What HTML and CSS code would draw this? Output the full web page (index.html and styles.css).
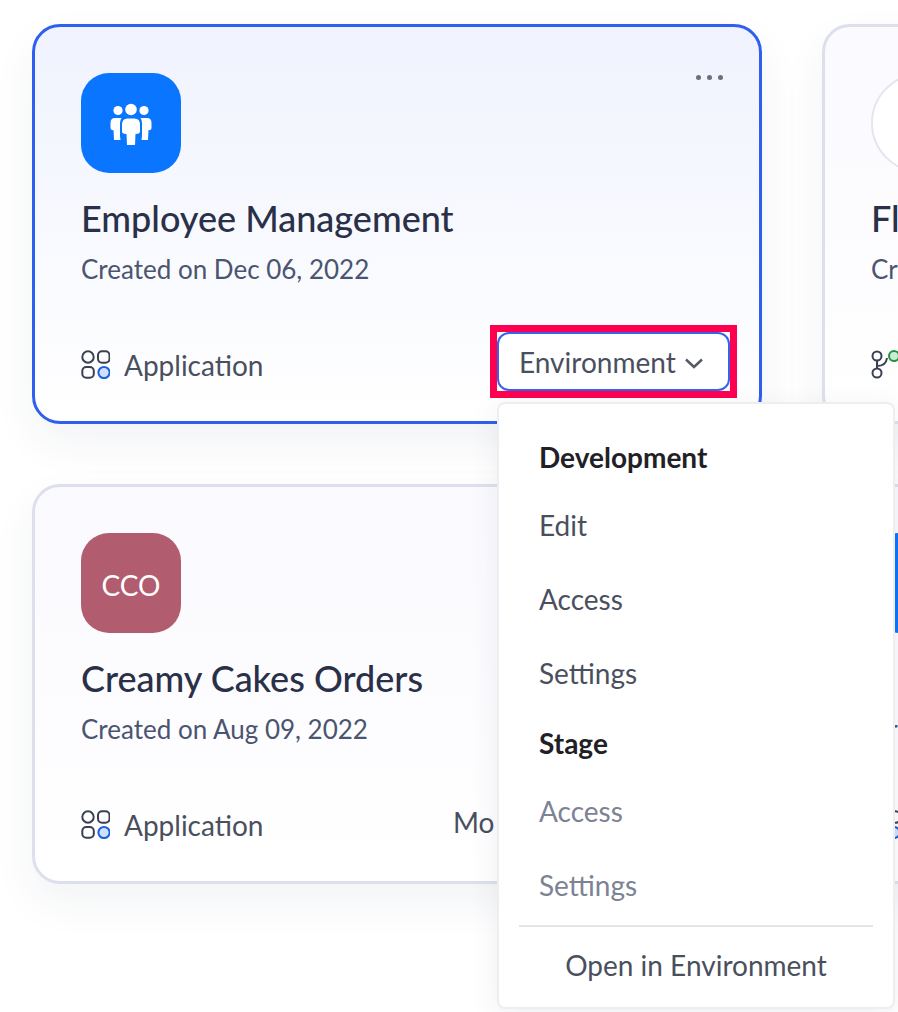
FILE: index.html
```html
<!DOCTYPE html>
<html lang="en">
<head>
<meta charset="utf-8">
<title>Applications</title>
<link rel="stylesheet" href="styles.css">
</head>
<body>
<main class="grid">
  <article class="card card-active">
    <button class="more" aria-label="More"><span></span><span></span><span></span></button>
    <div class="logo logo-blue">
      <svg width="100" height="100" viewBox="0 0 100 100"><g fill="#fff"><circle cx="37" cy="37.500" r="4.600"/><circle cx="63" cy="37.500" r="4.600"/><circle cx="50" cy="36.500" r="5.800"/><path d="M34 45h6.500q-1.500 2-1.500 5v13l.5 4h-6.500l-.5-10-1 .2q-2-.2-2-2.200v-5q0-5 4.500-5z"/><path d="M66 45h-6.500q1.500 2 1.500 5v13l-.5 4h6.500l.5-10 1 .2q2-.2 2-2.200v-5q0-5-4.500-5z"/><path d="M46.500 45.500h7q5.500 0 5.500 6v7q0 2-2 2.200l-2.500.3-.5 11h-8l-.5-11-2.500-.3q-2-.2-2-2.200v-7q0-6 5.500-6z"/></g></svg>
    </div>
    <h2 class="title">Employee Management</h2>
    <p class="date">Created on Dec 06, 2022</p>
    <div class="foot">
      <span class="kind">
        <svg class="kind-icon" width="29" height="29" viewBox="0 0 29 29"><g fill="none" stroke="#3a4052" stroke-width="2"><circle cx="7" cy="7" r="5.700"/><rect x="17" y="1.300" width="11.500" height="11.500" rx="4"/><rect x="1.300" y="17" width="11.500" height="10.700" rx="4"/></g><circle cx="23" cy="22.500" r="5.600" fill="#cfe0fb" stroke="#1d5fd6" stroke-width="2"/></svg>
        Application
      </span>
      <span class="mark"><button class="env">Environment<svg class="chev" width="20" height="11" viewBox="0 0 20 11"><path d="M2 1.500l8 7.500 8-7.500" fill="none" stroke="#565a63" stroke-width="2.500"/></svg></button></span>
    </div>
    <nav class="menu">
      <h3 class="menu-head">Development</h3>
      <a class="menu-item">Edit</a>
      <a class="menu-item">Access</a>
      <a class="menu-item">Settings</a>
      <h3 class="menu-head menu-head-stage">Stage</h3>
      <a class="menu-item muted">Access</a>
      <a class="menu-item muted">Settings</a>
      <a class="menu-open">Open in Environment</a>
    </nav>
  </article>

  <article class="card">
    <div class="logo logo-round"></div>
    <h2 class="title">Fl</h2>
    <p class="date">Cr</p>
    <div class="foot">
      <span class="kind">
        <svg class="kind-icon" width="29" height="29" viewBox="0 0 29 29"><g fill="none" stroke="#3a4052" stroke-width="2"><circle cx="6" cy="6" r="4.500"/><circle cx="6" cy="23" r="4.500"/><path d="M6 10.500v8M6 16q9 0 10-8"/></g><circle cx="23" cy="6" r="5" fill="#c9ecd2" stroke="#21913f" stroke-width="2"/></svg>
      </span>
    </div>
  </article>

  <article class="card">
    <div class="logo logo-rose">CCO</div>
    <h2 class="title">Creamy Cakes Orders</h2>
    <p class="date">Created on Aug 09, 2022</p>
    <div class="foot">
      <span class="kind">
        <svg class="kind-icon" width="29" height="29" viewBox="0 0 29 29"><g fill="none" stroke="#3a4052" stroke-width="2"><circle cx="7" cy="7" r="5.700"/><rect x="17" y="1.300" width="11.500" height="11.500" rx="4"/><rect x="1.300" y="17" width="11.500" height="10.700" rx="4"/></g><circle cx="23" cy="22.500" r="5.600" fill="#cfe0fb" stroke="#1d5fd6" stroke-width="2"/></svg>
        Application
      </span>
      <span class="env-plain">Mo</span>
    </div>
  </article>

  <article class="card">
    <div class="logo logo-blue"></div>
    <h2 class="title">Il</h2>
    <p class="date">Cr</p>
    <div class="foot">
      <span class="kind">
        <svg class="kind-icon" width="29" height="29" viewBox="0 0 29 29"><g fill="none" stroke="#3a4052" stroke-width="2"><circle cx="7" cy="7" r="5.700"/><rect x="17" y="1.300" width="11.500" height="11.500" rx="4"/><rect x="1.300" y="17" width="11.500" height="10.700" rx="4"/></g><circle cx="23" cy="22.500" r="5.600" fill="#cfe0fb" stroke="#1d5fd6" stroke-width="2"/></svg>
      </span>
    </div>
  </article>
</main>
</body>
</html>
```

FILE: styles.css
```css
* { box-sizing: border-box; }
html, body { height: 100%; }
body {
  margin: 0;
  overflow: hidden;
  background: #fff;
  font-family: Lato, "Liberation Sans", sans-serif;
  color: #2a3047;
}
.grid {
  display: grid;
  grid-template-columns: 730px 730px;
  grid-auto-rows: 400px;
  gap: 60px;
  padding: 24px 0 0 32px;
  width: 1600px;
}
.card {
  position: relative;
  display: flex;
  flex-direction: column;
  padding: 46px 22px 0 46px;
  border: 3px solid #dde0ec;
  border-radius: 28px;
  background: linear-gradient(180deg, #fafaff 0%, #ffffff 100%);
  box-shadow: 0 18px 44px rgba(40, 50, 90, 0.06);
}
.card-active {
  border-color: #2f5ff0;
  background: linear-gradient(180deg, #f0f3fe 0%, #ffffff 100%);
  z-index: 2;
}
.logo {
  flex: none;
  display: flex;
  align-items: center;
  justify-content: center;
  width: 100px;
  height: 100px;
  padding-top: 3px;
  border-radius: 28px;
  color: #fff;
  font-size: 28px;
}
.logo-blue { background: #0a75ff; padding-top: 0; }
.logo-rose { background: #b25c70; }
.logo-round { background: #fff; border: 2px solid #e4e6ef; border-radius: 50%; }
.title {
  margin: 23px 0 0;
  font-size: 36px;
  line-height: 44px;
  font-weight: 500;
  white-space: nowrap;
}
.date {
  margin: 11px 0 0;
  font-size: 26px;
  line-height: 36px;
  color: #4b5470;
  white-space: nowrap;
}
.foot {
  display: flex;
  align-items: center;
  justify-content: space-between;
  margin-top: 38px;
  height: 73px;
}
.kind {
  display: flex;
  align-items: center;
  gap: 14px;
  font-size: 28px;
  color: #4a4f5e;
  position: relative;
  top: 3px;
  white-space: nowrap;
}
.kind-icon { flex: none; }
.mark {
  display: block;
  border: 7px solid #ff0050;
  background: #fff;
}
.env {
  display: flex;
  align-items: center;
  gap: 8px;
  height: 59px;
  width: 233px;
  padding: 0 0 0 20px;
  border: 2px solid #3563ec;
  border-radius: 12px;
  background: #fff;
  font: inherit;
  font-size: 28px;
  color: #4a4f5e;
}
.chev { margin-top: 4px; }
.env-plain {
  font-size: 28px;
  color: #4a4f5e;
  width: 284px;
  position: relative;
  top: 0;
}
.more {
  position: absolute;
  top: 48px;
  right: 36px;
  display: flex;
  gap: 6px;
  padding: 0;
  border: 0;
  background: none;
}
.more span {
  width: 5px;
  height: 5px;
  border-radius: 50%;
  background: #6b7080;
}
.menu {
  position: absolute;
  top: 375px;
  left: 462px;
  width: 398px;
  height: 607px;
  display: flex;
  flex-direction: column;
  padding: 33px 20px 0 20px;
  background: #fff;
  border: 2px solid #eeeef1;
  border-radius: 8px;
  box-shadow: 0 8px 30px rgba(40, 50, 90, 0.08);
  z-index: 3;
}
.menu-head {
  margin: 0 0 11px;
  padding-left: 20px;
  font-size: 28px;
  line-height: 40px;
  font-weight: 700;
  color: #1f2126;
}
.menu-head-stage { margin-top: 13px; }
.menu-item {
  display: block;
  padding-left: 20px;
  font-size: 28px;
  line-height: 74px;
  color: #4a4f5e;
}
.muted { color: #7d8294; }
.menu-open {
  display: block;
  margin-top: 3px;
  padding-top: 18px;
  border-top: 2px solid #e4e5e9;
  font-size: 28px;
  line-height: 40px;
  text-align: center;
  color: #4a4f5e;
}
```
